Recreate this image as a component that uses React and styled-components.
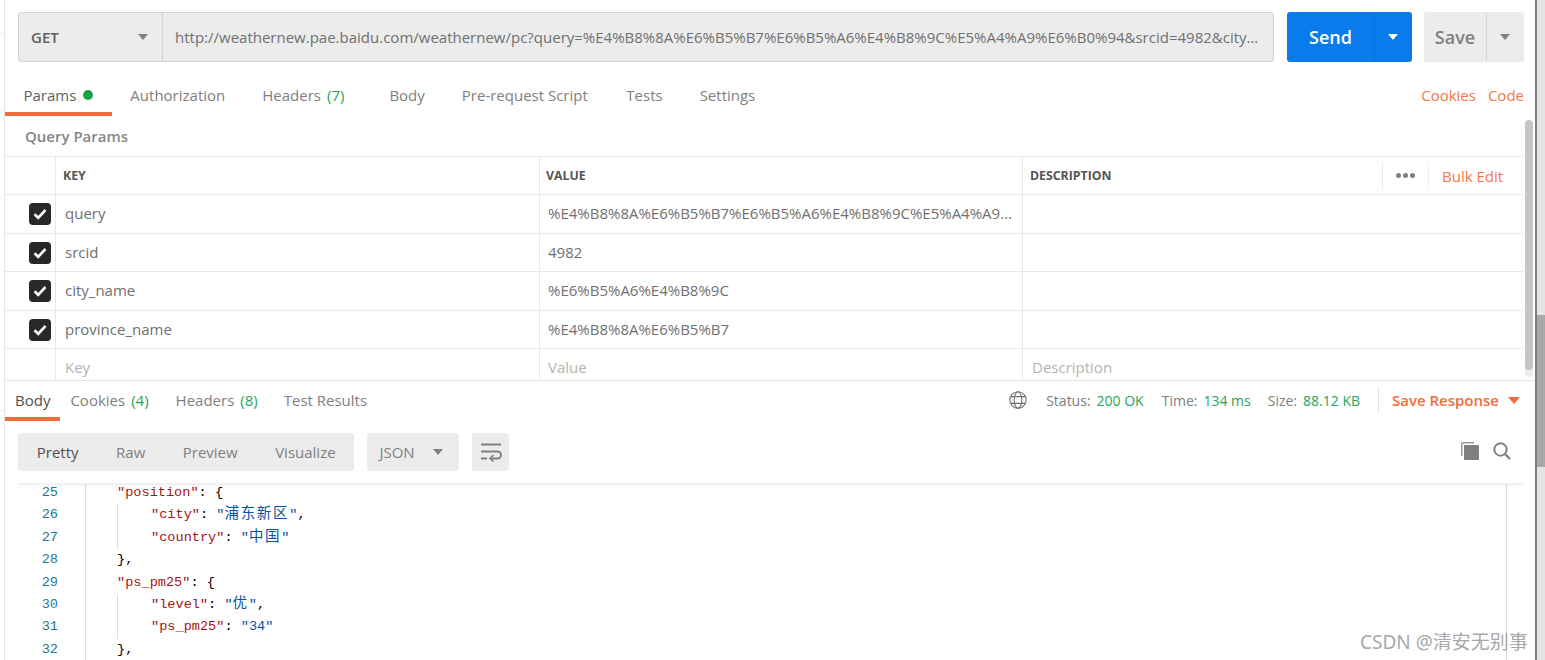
import React from "react";
import styled, { createGlobalStyle } from "styled-components";

const Global = createGlobalStyle`
  html, body { margin: 0; padding: 0; background: #fff; overflow: hidden; }
  * { box-sizing: border-box; }
  body { font-family: "Open Sans", "Noto Sans", sans-serif; font-size: 15px; color: #808080; }
`;

const ORANGE = "#f26b3a";
const GREEN = "#26a65b";

const Page = styled.div`
  position: relative;
  display: flex;
  width: 1545px;
  height: 660px;
  overflow: hidden;
`;
const LeftRail = styled.div`
  width: 5px;
  flex: none;
  border-right: 1px solid #e6e6e6;
`;
const RailPiece = styled.div`
  height: ${(p) => p.$h}px;
  border-bottom: 1px solid #ececec;
`;
const Main = styled.div`
  width: 1530px;
  flex: none;
  display: flex;
  flex-direction: column;
`;
const WindowEdge = styled.div`
  width: 10px;
  flex: none;
  display: flex;
  flex-direction: column;
  border-left: 2px solid #7d7d7d;
  background: #e4e4e4;
`;
const EdgeSpacer = styled.div`
  height: 315px;
`;
const EdgeThumb = styled.div`
  height: 152px;
  background: #a9a9a9;
`;

const RequestBar = styled.div`
  display: flex;
  gap: 12px;
  height: 74px;
  padding: 12px 11px 12px 13px;
`;
const UrlGroup = styled.div`
  flex: 1;
  min-width: 0;
  margin-right: 1px;
  display: flex;
  background: #ececec;
  border: 1px solid #d4d4d4;
  border-radius: 3px;
`;
const MethodBox = styled.div`
  width: 144px;
  flex: none;
  display: flex;
  align-items: center;
  justify-content: space-between;
  padding: 0 14px 0 12px;
  border-right: 1px solid #d4d4d4;
  font-size: 15px;
  font-weight: 600;
  color: #606060;
`;
const Caret = styled.span`
  display: inline-block;
  width: 0;
  height: 0;
  border-left: ${(p) => p.$s || 5}px solid transparent;
  border-right: ${(p) => p.$s || 5}px solid transparent;
  border-top: ${(p) => (p.$s || 5) + 1}px solid ${(p) => p.$c || "#808080"};
`;
const UrlText = styled.div`
  flex: 1;
  min-width: 0;
  padding: 0 13px 0 12px;
  line-height: 48px;
  font-size: 15px;
  color: #707070;
  white-space: nowrap;
  overflow: hidden;
  text-overflow: ellipsis;
`;
const SplitButton = styled.div`
  width: ${(p) => p.$w}px;
  flex: none;
  display: flex;
  border-radius: 3px;
  background: ${(p) => p.$bg};
  color: ${(p) => p.$fg};
  font-size: 18px;
  font-weight: 600;
`;
const ButtonMain = styled.div`
  flex: 1;
  display: flex;
  align-items: center;
  justify-content: center;
  border-right: 1px solid ${(p) => p.$line};
`;
const ButtonSide = styled.div`
  width: 37px;
  flex: none;
  display: flex;
  align-items: center;
  justify-content: center;
  padding-right: 2px;
`;

const TabRow = styled.div`
  display: flex;
  height: 42px;
  padding-right: 11px;
`;
const ReqTab = styled.div`
  display: flex;
  align-items: center;
  height: 42px;
  padding: 3px 18.5px 0;
  margin-right: ${(p) => p.$mr || 0}px;
  font-size: 15px;
  color: ${(p) => (p.$active ? "#606060" : "#808080")};
  border-bottom: 4px solid ${(p) => (p.$active ? ORANGE : "transparent")};
  white-space: nowrap;
`;
const Dot = styled.span`
  width: 10px;
  height: 10px;
  margin-left: 7px;
  border-radius: 50%;
  background: #1e9e46;
`;
const Count = styled.span`
  color: ${GREEN};
  margin-left: 6px;
`;
const TabLinks = styled.div`
  margin-left: auto;
  display: flex;
  align-items: center;
  gap: 12px;
  height: 42px;
  font-size: 15px;
  color: #f4764a;
`;

const RequestPane = styled.div`
  display: flex;
  height: 265px;
  border-bottom: 1px solid #e2e2e2;
`;
const ParamsColumn = styled.div`
  width: 1518px;
  flex: none;
  display: flex;
  flex-direction: column;
`;
const ParamsTitle = styled.div`
  height: 40px;
  padding: 9px 0 0 20px;
  font-size: 15px;
  font-weight: 600;
  color: #858585;
  line-height: 22px;
`;
const ScrollTrack = styled.div`
  width: 8px;
  margin: 4px 0 3px 2px;
  border-radius: 4px;
  background: #ececec;
  flex: none;
  height: 257px;
`;
const ScrollThumb = styled.div`
  height: 250px;
  border-radius: 4px;
  background: #c6c6c6;
`;
const Row = styled.div`
  display: grid;
  grid-template-columns: 50px 484px 483px 1fr;
  height: ${(p) => p.$h}px;
  border-top: ${(p) => (p.$top ? "1px solid #e8e8e8" : "none")};
  border-bottom: ${(p) => (p.$last ? "none" : "1px solid #e8e8e8")};
`;
const Cell = styled.div`
  display: flex;
  align-items: center;
  min-width: 0;
  padding: ${(p) => (p.$ph ? "4px 9px 0" : "0 9px 2px")};
  padding-left: ${(p) => (p.$tight ? 8 : 9)}px;
  border-left: 1px solid #e8e8e8;
  font-size: 15px;
  color: ${(p) => (p.$ph ? "#b4b4b4" : "#707070")};
`;
const HeadCell = styled.div`
  display: flex;
  align-items: center;
  min-width: 0;
  padding: 0 7px;
  padding-left: ${(p) => (p.$tight ? 6 : 7)}px;
  border-left: 1px solid #e8e8e8;
  font-size: 12.3px;
  font-weight: 700;
  color: #555;
`;
const Clip = styled.span`
  white-space: nowrap;
  overflow: hidden;
  text-overflow: ellipsis;
`;
const CheckCell = styled.div`
  display: flex;
  align-items: center;
  padding-left: 24px;
`;
const Check = styled.div`
  width: 22px;
  height: 22px;
  display: flex;
  align-items: center;
  justify-content: center;
  border-radius: 4px;
  background: #282828;
`;
const HeadTools = styled.div`
  margin-left: auto;
  margin-right: -7px;
  display: flex;
  align-items: center;
  height: 100%;
`;
const MoreBox = styled.div`
  width: 47px;
  height: 28px;
  display: flex;
  align-items: center;
  justify-content: center;
  gap: 2px;
  padding-right: 1px;
  border-left: 1px solid #e8e8e8;
  border-right: 1px solid #f0f0f0;
`;
const MoreDot = styled.span`
  width: 5px;
  height: 5px;
  border-radius: 50%;
  background: #808080;
`;
const BulkEdit = styled.div`
  width: 94px;
  padding-left: 13px;
  font-size: 15px;
  font-weight: 400;
  color: #f4764a;
`;

const ResponseBar = styled.div`
  display: flex;
  height: 40px;
  padding-right: 15px;
`;
const ResTab = styled.div`
  display: flex;
  align-items: center;
  height: 40px;
  padding: 1px ${(p) => p.$r}px 0 ${(p) => p.$l}px;
  font-size: 15px;
  color: ${(p) => (p.$active ? "#505050" : "#808080")};
  border-bottom: 4px solid ${(p) => (p.$active ? ORANGE : "transparent")};
  white-space: nowrap;
`;
const StatusGroup = styled.div`
  margin-left: auto;
  display: flex;
  align-items: center;
  height: 40px;
  padding-bottom: 2px;
  font-size: 14px;
  color: #808080;
`;
const StatusItem = styled.span`
  margin-left: ${(p) => p.$ml}px;
  white-space: nowrap;
`;
const StatusValue = styled.span`
  color: ${GREEN};
  margin-left: 6px;
`;
const StatusDivider = styled.div`
  width: 1px;
  height: 26px;
  margin: 0 13px 0 18px;
  background: #e4e4e4;
`;
const SaveResponse = styled.div`
  display: flex;
  align-items: center;
  gap: 9px;
  font-size: 15px;
  font-weight: 600;
  color: #f26b3a;
`;

const Toolbar = styled.div`
  display: flex;
  align-items: flex-start;
  gap: 13px;
  height: 60px;
  padding: 12px 24px 0 13px;
`;
const ViewGroup = styled.div`
  display: flex;
  height: 38px;
  border-radius: 3px;
  background: #ececec;
`;
const ViewItem = styled.div`
  display: flex;
  align-items: center;
  padding: 0 18.75px;
  font-size: 15px;
  color: ${(p) => (p.$active ? "#505050" : "#808080")};
`;
const FormatBox = styled.div`
  width: 92px;
  height: 38px;
  display: flex;
  align-items: center;
  justify-content: space-between;
  padding: 0 16px 0 12px;
  border-radius: 3px;
  background: #ececec;
  font-size: 15px;
  color: #808080;
`;
const WrapBox = styled.div`
  width: 37px;
  height: 38px;
  display: flex;
  align-items: center;
  justify-content: center;
  border-radius: 3px;
  background: #ececec;
`;
const ToolIcons = styled.div`
  margin-left: auto;
  display: flex;
  align-items: center;
  gap: 14px;
  height: 36px;
`;

const CodePanel = styled.div`
  display: flex;
  height: 179px;
  margin: 0 11px 0 13px;
  overflow: hidden;
  background: linear-gradient(to bottom, #fff 2px, #eeeeee 2px, #fff 7px);
`;
const LineNumbers = styled.div`
  width: 67px;
  flex: none;
  padding: 1px 27px 0 0;
  text-align: right;
`;
const CodeFont = styled.div`
  font-family: "Liberation Mono", "DejaVu Sans Mono", "Noto Sans CJK SC", monospace;
  font-size: 13.6px;
  line-height: 22.4px;
  height: 22.4px;
  white-space: pre;
  color: ${(p) => p.$c || "#000"};
`;
const CodeArea = styled.div`
  flex: 1;
  min-width: 0;
  margin: 2px 17px 0 0;
  padding-left: 31px;
  border-left: 1px solid #dcdcdc;
  border-right: 1px solid #dcdcdc;
`;
const CodeInner = styled.div`
  margin-top: -1px;
`;
const IndentBlock = styled.div`
  padding-left: 33px;
  border-left: 1px solid #dcdcdc;
`;
const Key = styled.span`
  color: #a31515;
`;
const Str = styled.span`
  color: #0451a5;
`;
const Cjk = styled.span`
  font-family: "Noto Sans CJK SC", sans-serif;
  font-size: 14.5px;
  line-height: 0;
  letter-spacing: 1.7px;
`;
const Watermark = styled.div`
  position: absolute;
  left: 1360px;
  top: 629px;
  font-family: "Noto Sans", "Noto Sans CJK SC", sans-serif;
  font-size: 19px;
  line-height: 26px;
  color: #a8a8a8;
  white-space: nowrap;
`;

const CheckMark = () => (
  <svg width="14" height="12" viewBox="0 0 14 12" fill="none">
    <path d="M1.5 6.2 L5.2 9.8 L12.5 2" stroke="#fff" strokeWidth="2.6" />
  </svg>
);
const Globe = () => (
  <svg width="18" height="18" viewBox="0 0 18 18" fill="none" stroke="#707070" strokeWidth="1.1">
    <circle cx="9" cy="9" r="8.2" />
    <ellipse cx="9" cy="9" rx="3.8" ry="8.2" />
    <path d="M1.6 5.6 H16.4 M1.6 12.4 H16.4" />
  </svg>
);
const WrapIcon = () => (
  <svg width="22" height="20" viewBox="0 0 22 20" fill="none" stroke="#808080" strokeWidth="2">
    <path d="M1 2.5 H21" />
    <path d="M1 9.5 H17.5 A3.5 3.5 0 0 1 17.5 16.5 H11" />
    <path d="M1 16.5 H7" />
    <path d="M13.5 13.2 L10 16.5 L13.5 19.5" strokeWidth="1.6" />
  </svg>
);
const CopyIcon = () => (
  <svg width="18" height="18" viewBox="0 0 18 18">
    <path d="M0 1.5 A1.5 1.5 0 0 1 1.5 0 H13 V1.5 H1.5 V14 H0 Z" fill="#9a9a9a" />
    <rect x="3" y="3" width="15" height="15" rx="1" fill="#808080" />
  </svg>
);
const SearchIcon = () => (
  <svg width="18" height="18" viewBox="0 0 18 18" fill="none" stroke="#808080" strokeWidth="2">
    <circle cx="7.5" cy="7.5" r="6.2" />
    <path d="M12 12 L17 17" strokeWidth="2.4" />
  </svg>
);

const URL_VALUE =
  "http://weathernew.pae.baidu.com/weathernew/pc?query=%E4%B8%8A%E6%B5%B7%E6%B5%A6%E4%B8%9C%E5%A4%A9%E6%B0%94&srcid=4982&city_name=%E6%B5%A6%E4%B8%9C&province_name=%E4%B8%8A%E6%B5%B7";

const params = [
  ["query", "%E4%B8%8A%E6%B5%B7%E6%B5%A6%E4%B8%9C%E5%A4%A9%E6%B0%94", 39],
  ["srcid", "4982", 38],
  ["city_name", "%E6%B5%A6%E4%B8%9C", 39],
  ["province_name", "%E4%B8%8A%E6%B5%B7", 38],
];

export default function App() {
  return (
    <Page>
      <Global />
      <LeftRail>
        <RailPiece $h={34} />
        <RailPiece $h={77} />
        <RailPiece $h={300} />
      </LeftRail>
      <Main>
        <RequestBar>
          <UrlGroup>
            <MethodBox>
              GET <Caret />
            </MethodBox>
            <UrlText>{URL_VALUE}</UrlText>
          </UrlGroup>
          <SplitButton $w={125} $bg="#097bed" $fg="#fff">
            <ButtonMain $line="#0a6fd4">Send</ButtonMain>
            <ButtonSide>
              <Caret $c="#fff" />
            </ButtonSide>
          </SplitButton>
          <SplitButton $w={100} $bg="#ececec" $fg="#808080">
            <ButtonMain $line="#d8d8d8">Save</ButtonMain>
            <ButtonSide>
              <Caret />
            </ButtonSide>
          </SplitButton>
        </RequestBar>

        <TabRow>
          <ReqTab $active>
            Params <Dot />
          </ReqTab>
          <ReqTab>Authorization</ReqTab>
          <ReqTab $mr={8}>
            Headers <Count>(7)</Count>
          </ReqTab>
          <ReqTab>Body</ReqTab>
          <ReqTab $mr={1.5}>Pre-request Script</ReqTab>
          <ReqTab>Tests</ReqTab>
          <ReqTab>Settings</ReqTab>
          <TabLinks>
            <span>Cookies</span>
            <span>Code</span>
          </TabLinks>
        </TabRow>

        <RequestPane>
          <ParamsColumn>
            <ParamsTitle>Query Params</ParamsTitle>
            <Row $h={39} $top>
              <div />
              <HeadCell>KEY</HeadCell>
              <HeadCell $tight>VALUE</HeadCell>
              <HeadCell>
                DESCRIPTION
                <HeadTools>
                  <MoreBox>
                    <MoreDot />
                    <MoreDot />
                    <MoreDot />
                  </MoreBox>
                  <BulkEdit>Bulk Edit</BulkEdit>
                </HeadTools>
              </HeadCell>
            </Row>
            {params.map(([k, v, h]) => (
              <Row key={k} $h={h}>
                <CheckCell>
                  <Check>
                    <CheckMark />
                  </Check>
                </CheckCell>
                <Cell>{k}</Cell>
                <Cell $tight>
                  <Clip>{v}</Clip>
                </Cell>
                <Cell />
              </Row>
            ))}
            <Row $h={31} $last>
              <div />
              <Cell $ph>Key</Cell>
              <Cell $ph $tight>Value</Cell>
              <Cell $ph>Description</Cell>
            </Row>
          </ParamsColumn>
          <ScrollTrack>
            <ScrollThumb />
          </ScrollTrack>
        </RequestPane>

        <ResponseBar>
          <ResTab $active $l={10} $r={10}>Body</ResTab>
          <ResTab $l={10} $r={14}>
            Cookies <Count>(4)</Count>
          </ResTab>
          <ResTab $l={13} $r={13}>
            Headers <Count>(8)</Count>
          </ResTab>
          <ResTab $l={13} $r={13}>Test Results</ResTab>
          <StatusGroup>
            <Globe />
            <StatusItem $ml={19}>
              Status:<StatusValue>200 OK</StatusValue>
            </StatusItem>
            <StatusItem $ml={18}>
              Time:<StatusValue>134 ms</StatusValue>
            </StatusItem>
            <StatusItem $ml={17}>
              Size:<StatusValue>88.12 KB</StatusValue>
            </StatusItem>
            <StatusDivider />
            <SaveResponse>
              Save Response <Caret $s={6} $c="#f26b3a" />
            </SaveResponse>
          </StatusGroup>
        </ResponseBar>

        <Toolbar>
          <ViewGroup>
            <ViewItem $active>Pretty</ViewItem>
            <ViewItem>Raw</ViewItem>
            <ViewItem>Preview</ViewItem>
            <ViewItem>Visualize</ViewItem>
          </ViewGroup>
          <FormatBox>
            JSON <Caret />
          </FormatBox>
          <WrapBox>
            <WrapIcon />
          </WrapBox>
          <ToolIcons>
            <CopyIcon />
            <SearchIcon />
          </ToolIcons>
        </Toolbar>

        <CodePanel>
          <LineNumbers>
            {[25, 26, 27, 28, 29, 30, 31, 32].map((n) => (
              <CodeFont key={n} $c="#237893">
                {n}
              </CodeFont>
            ))}
          </LineNumbers>
          <CodeArea>
            <CodeInner>
              <CodeFont>
                <Key>"position"</Key>: {"{"}
              </CodeFont>
              <IndentBlock>
                <CodeFont>
                  <Key>"city"</Key>: <Str>"<Cjk>浦东新区</Cjk>"</Str>,
                </CodeFont>
                <CodeFont>
                  <Key>"country"</Key>: <Str>"<Cjk>中国</Cjk>"</Str>
                </CodeFont>
              </IndentBlock>
              <CodeFont>{"},"}</CodeFont>
              <CodeFont>
                <Key>"ps_pm25"</Key>: {"{"}
              </CodeFont>
              <IndentBlock>
                <CodeFont>
                  <Key>"level"</Key>: <Str>"<Cjk>优</Cjk>"</Str>,
                </CodeFont>
                <CodeFont>
                  <Key>"ps_pm25"</Key>: <Str>"34"</Str>
                </CodeFont>
              </IndentBlock>
              <CodeFont>{"},"}</CodeFont>
            </CodeInner>
          </CodeArea>
        </CodePanel>
      </Main>
      <WindowEdge>
        <EdgeSpacer />
        <EdgeThumb />
      </WindowEdge>
      <Watermark>CSDN @清安无别事</Watermark>
    </Page>
  );
}
